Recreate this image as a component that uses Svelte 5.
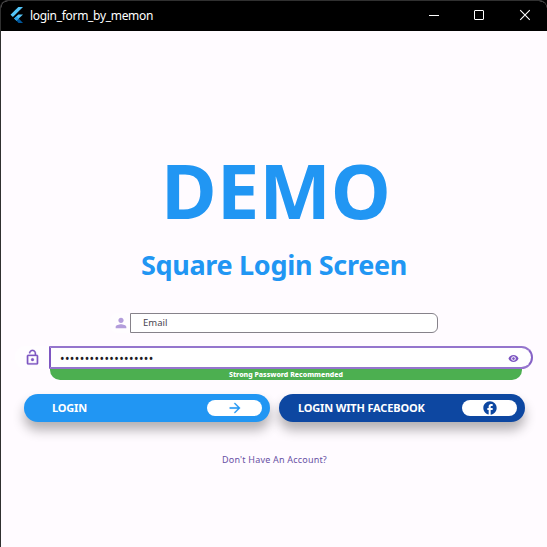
<script>
  const password = '•'.repeat(19);
</script>

<div class="window">
  <header>
    <svg class="logo" width="14" height="16" viewBox="0 0 14 16">
      <path fill="#54c5f8" d="M8.3 0H13L2.9 10.1.5 7.8Z" />
      <path fill="#54c5f8" d="M8.3 7.4H13L8.8 11.6 6.5 13.8 4.1 11.5Z" />
      <path fill="#01579b" d="M6.5 13.8 8.8 11.6 13 15.9H8.5Z" />
      <path fill="#29a4e8" d="M4.1 11.5 6.5 9.2 8.8 11.6 6.5 13.8Z" />
    </svg>
    <span class="caption">login_form_by_memon</span>
    <svg class="controls" width="104" height="12" viewBox="0 0 104 12" fill="none" stroke="#fff">
      <path d="M0 6.5H10" />
      <rect x="45.5" y="1.5" width="9" height="9" rx=".5" />
      <path d="M91.2 1.2 100.8 10.8M100.8 1.2 91.2 10.8" stroke-width="1.1" />
    </svg>
  </header>

  <main>
    <h1>DEMO</h1>
    <h2>Square Login Screen</h2>

    <div class="email-row">
      <div class="icon-box person">
        <svg width="16" height="16" viewBox="0 0 24 24" fill="#b39ddb">
          <path d="M12 12c2.21 0 4-1.79 4-4s-1.79-4-4-4-4 1.79-4 4 1.79 4 4 4zm0 2c-2.67 0-8 1.34-8 4v2h16v-2c0-2.66-5.33-4-8-4z" />
        </svg>
      </div>
      <div class="email">Email</div>
    </div>

    <div class="password-row">
      <div class="icon-box lock">
        <svg width="17" height="17" viewBox="0 0 24 24" fill="#7e57c2" stroke="#7e57c2" stroke-width=".4">
          <path d="M12 17c1.1 0 2-.9 2-2s-.9-2-2-2-2 .9-2 2 .9 2 2 2zm6-9h-1V6c0-2.76-2.24-5-5-5S7 3.24 7 6h1.9c0-1.71 1.39-3.1 3.1-3.1s3.1 1.39 3.1 3.1v2H6c-1.1 0-2 .9-2 2v10c0 1.1.9 2 2 2h12c1.1 0 2-.9 2-2V10c0-1.1-.9-2-2-2zm0 12H6V10h12v10z" />
        </svg>
      </div>
      <div class="password">
        <span class="dots">{password}</span>
        <svg width="11" height="11" viewBox="0 0 24 24" fill="#7e57c2">
          <path d="M12 4.5C7 4.5 2.73 7.61 1 12c1.73 4.39 6 7.5 11 7.5s9.27-3.11 11-7.5c-1.73-4.39-6-7.5-11-7.5zM12 17c-2.76 0-5-2.24-5-5s2.24-5 5-5 5 2.24 5 5-2.24 5-5 5zm0-8c-1.66 0-3 1.34-3 3s1.34 3 3 3 3-1.34 3-3-1.34-3-3-3z" />
        </svg>
      </div>
    </div>
    <div class="hint">Strong Password Recommended</div>

    <div class="buttons">
      <div class="button login">
        <span>LOGIN</span>
        <div class="pill">
          <svg width="16" height="16" viewBox="0 0 24 24" fill="#2196f3" stroke="#2196f3" stroke-width=".3">
            <path d="M12 4l-1.41 1.41L16.17 11H4v2h12.17l-5.58 5.59L12 20l8-8z" />
          </svg>
        </div>
      </div>
      <div class="button facebook">
        <span>LOGIN WITH FACEBOOK</span>
        <div class="pill">
          <svg width="16" height="16" viewBox="0 0 24 24" fill="#0d47a1">
            <path d="M22 12c0-5.52-4.48-10-10-10S2 6.48 2 12c0 4.84 3.44 8.87 8 9.8V15H8v-3h2V9.5C10 7.57 11.57 6 13.5 6H16v3h-2c-.55 0-1 .45-1 1v2h3v3h-3v6.95c5.05-.5 9-4.76 9-9.95z" />
          </svg>
        </div>
      </div>
    </div>

    <div class="signup">Don't Have An Account?</div>
  </main>
</div>

<style>
  :global(body) {
    background: #000;
  }
  .window {
    box-sizing: border-box;
    width: 547px;
    height: 547px;
    overflow: hidden;
    display: flex;
    flex-direction: column;
    background: #fffbff;
    border: solid #303030;
    border-width: 1px 0 0 1px;
    border-radius: 8px 8px 0 0;
    font-family: 'Noto Sans', 'Open Sans', sans-serif;
    white-space: nowrap;
  }
  header {
    height: 30px;
    flex: none;
    display: flex;
    align-items: center;
    background: #000;
    color: #fff;
  }
  .logo {
    margin-left: 9px;
    margin-top: -2px;
  }
  .caption {
    margin-left: 6px;
    font-size: 12px;
    line-height: 16px;
    letter-spacing: -0.31px;
  }
  .controls {
    margin-left: auto;
    margin-right: 14px;
    margin-top: -2px;
  }
  main {
    display: flex;
    flex-direction: column;
    align-items: flex-start;
  }
  h1,
  h2 {
    margin: 0;
    align-self: stretch;
    text-align: center;
    color: #2196f3;
    font-weight: 700;
  }
  h1 {
    margin-top: 109px;
    padding-left: 4px;
    font-size: 76px;
    line-height: 100px;
  }
  h2 {
    margin-top: 5px;
    font-size: 27px;
    line-height: 40px;
    letter-spacing: -0.32px;
  }
  .email-row {
    display: flex;
    margin: 28px 0 0 109px;
    height: 20px;
  }
  .icon-box {
    display: flex;
    align-items: center;
    background: #fffdff;
  }
  .person {
    width: 20px;
    border-radius: 8px 0 0 8px;
  }
  .person svg {
    margin-left: 3px;
  }
  .email {
    box-sizing: border-box;
    width: 308px;
    height: 20px;
    padding-left: 12px;
    border: 1px solid #86828a;
    border-radius: 0 6px 6px 0;
    background: #fff;
    font-size: 9.5px;
    line-height: 18px;
    color: #49454f;
  }
  .password-row {
    display: flex;
    margin: 13px 0 0 14px;
    height: 23px;
  }
  .lock {
    width: 34px;
    border-radius: 10px 0 0 10px;
  }
  .lock svg {
    margin-left: 9px;
  }
  .password {
    box-sizing: border-box;
    width: 484px;
    height: 23px;
    display: flex;
    align-items: center;
    justify-content: space-between;
    padding: 0 12px 0 9px;
    border: 2px solid #9575cd;
    border-left-color: #7e57c2;
    border-right-color: #8662c6;
    border-radius: 0 12px 12px 0;
    background: #fff;
    font-size: 12px;
    line-height: 16px;
    letter-spacing: 0.42px;
    color: #1c1b1f;
  }
  .dots,
  .password svg {
    margin-top: 2px;
  }
  .hint {
    width: 472px;
    height: 11px;
    margin-left: 49px;
    border-radius: 0 0 10px 10px;
    background: #4caf50;
    color: #fff;
    font-size: 7px;
    font-weight: 800;
    line-height: 12px;
    text-align: center;
  }
  .buttons {
    display: flex;
    gap: 9px;
    margin: 14px 0 0 23px;
  }
  .button {
    box-sizing: border-box;
    width: 246px;
    height: 28px;
    display: flex;
    align-items: center;
    justify-content: space-between;
    padding-right: 8px;
    border-radius: 14px;
    box-shadow: 0 8px 12px rgba(0, 0, 0, 0.3);
    color: #fff;
    font-size: 11px;
    font-weight: 700;
    line-height: 16px;
    letter-spacing: -0.16px;
  }
  .login {
    padding-left: 28px;
    background: #2196f3;
  }
  .facebook {
    padding-left: 19px;
    background: #0d47a1;
  }
  .pill {
    width: 55px;
    height: 16px;
    display: flex;
    align-items: center;
    justify-content: center;
    border-radius: 8px;
    background: #fff;
  }
  .signup {
    align-self: stretch;
    margin-top: 30px;
    padding-left: 1px;
    text-align: center;
    color: #6750a4;
    font-size: 9px;
    line-height: 16px;
    letter-spacing: 0.2px;
  }
</style>
